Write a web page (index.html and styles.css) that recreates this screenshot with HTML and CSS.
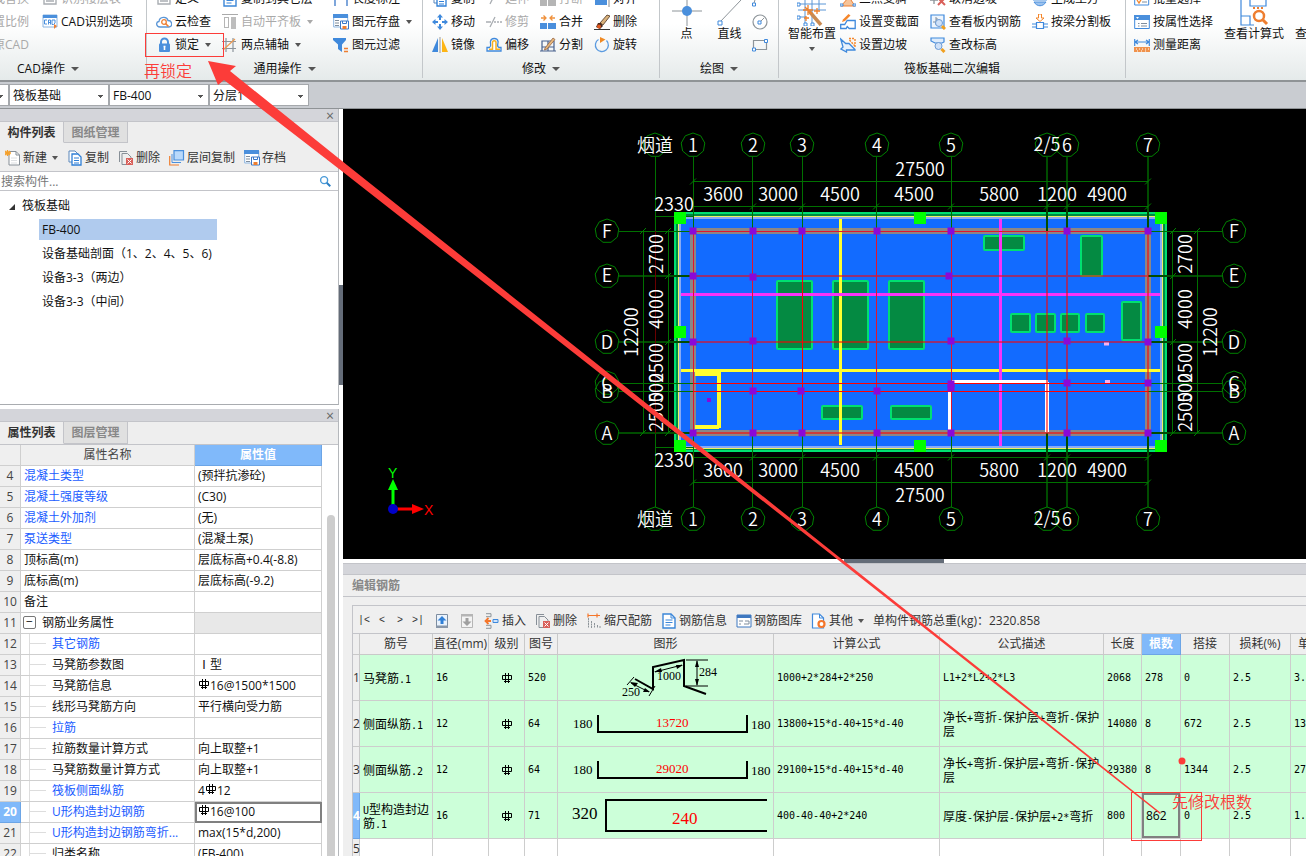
FILE: index.html
```html
<!DOCTYPE html>
<html lang="zh-CN">
<head>
  <meta charset="UTF-8" />
  <title>筏板基础 - FB-400</title>
  <link rel="stylesheet" href="styles.css">
</head>
<body>

  <!-- icon set -->
  <svg class="sprite" aria-hidden="true">
    <symbol id="i-doc" viewBox="0 0 16 16"><path d="M2 1h8l4 4v10H2z" fill="#fff" stroke="#3b86d8" stroke-width="1.4"/><path d="M10 1v4h4M4.500 7h7M4.500 9.500h7M4.500 12h5" fill="none" stroke="#3b86d8"/></symbol>
    <symbol id="i-gray" viewBox="0 0 16 16"><path d="M2 2h12v11H2zM4 10h8M4 7h8" fill="none" stroke="#a9adb2" stroke-width="1.400"/></symbol>
    <symbol id="i-cad" viewBox="0 0 16 16"><path d="M1 1h14v12H1z" fill="#fff" stroke="#8ab4e0"/><path d="M1 1h14v3H1z" fill="#4a8fdc"/><path d="M5 6H2.500v4H5M6.500 10.500V6h2v4.500M6.500 8.500h2M10 6v4.500h1.500L13 9V6z" fill="none" stroke="#4a8fdc"/><path d="M12 10l3 2-3 3z" fill="#ee7e30"/></symbol>
    <symbol id="i-cloud" viewBox="0 0 16 16"><path d="M4 13C0 13-.5 8 3 7.500 3.500 2.500 11 2 12 6.500 16.500 6.500 17 12.500 13 13z" fill="#fff" stroke="#5b96d6" stroke-width="1.300"/><circle cx="8" cy="8" r="2.300" fill="none" stroke="#ee7e30" stroke-width="1.300"/><path d="M9.500 9.500l3 3" stroke="#ee7e30" stroke-width="1.600"/></symbol>
    <symbol id="i-lock" viewBox="0 0 16 16"><path d="M5 7V5a3.500 3.500 0 0 1 7 0v2" fill="none" stroke="#4a8fdc" stroke-width="2"/><rect x="3" y="6.500" width="11" height="8.500" rx="1" fill="#4a8fdc"/><path d="M8.500 9v4M7.500 9.500h2" stroke="#fff" stroke-width="1.600"/></symbol>
    <symbol id="i-align" viewBox="0 0 16 16"><path d="M0 .5h16" stroke="#aaa"/><rect x="2.500" y="3.500" width="4" height="10" fill="none" stroke="#b5b5b5"/><rect x="9" y="3" width="5" height="12" fill="#bdbdbd"/></symbol>
    <symbol id="i-axis" viewBox="0 0 16 16"><path d="M4 1v14M11 1v14M0 4.500h14M0 11.500h14" stroke="#8d959c" stroke-width="1.200"/><path d="M1 13L13 2" stroke="#ee9a50" stroke-width="1.200"/></symbol>
    <symbol id="i-save" viewBox="0 0 16 16"><path d="M.7 1h14v12H.7z" fill="#fff" stroke="#8ab4e0"/><path d="M0 0h15v4H0z" fill="#4a8fdc"/><path d="M2 6.500h4M2 9h4M2 11.500h4" stroke="#7f8d9c"/><path d="M7.500 7h8v8h-8z" fill="#fff" stroke="#3b78c8"/><path d="M9.500 12h4v3h-4z" fill="#ee7e30"/><path d="M9.500 7v2.500h4V7" fill="none" stroke="#3b78c8"/></symbol>
    <symbol id="i-filter" viewBox="0 0 16 16"><path d="M0 1h13v2L9 7.500V15l-4-3V7.500L0 3z" fill="#3f89dc"/><path d="M11 11.500h4M11 14.500h4" stroke="#ee7e30" stroke-width="1.300"/></symbol>
    <symbol id="i-dim" viewBox="0 0 16 16"><path d="M2 15V7M14 15V7M2 8h12" fill="none" stroke="#3b78c8" stroke-width="1.300"/></symbol>
    <symbol id="i-copy" viewBox="0 0 16 16"><path d="M2 1h6l3 3v8H2z" fill="#fff" stroke="#5a87bb"/><path d="M5 4h6l3 3v8H5z" fill="#fff" stroke="#2f7fd6" stroke-width="1.300"/><path d="M7 8h5M7 10.500h5M7 13h5" stroke="#2f7fd6"/></symbol>
    <symbol id="i-move" viewBox="0 0 16 16"><path d="M8 0l3 3.500H9V6H7V3.500H5zM8 16l3-3.500H9V10H7v2.500H5zM0 8l3.500-3v2H6v2H3.500v2zM16 8l-3.500-3v2H10v2h2.500v2z" fill="#3f89dc"/></symbol>
    <symbol id="i-mirror" viewBox="0 0 16 16"><path d="M6 1v14H0z" fill="#3f89dc"/><path d="M10 1v14h6z" fill="#fdb515"/><path d="M8 0v16" stroke="#999"/></symbol>
    <symbol id="i-trim" viewBox="0 0 16 16"><path d="M0 8h5M8 8h2M11 8h2M14 8h2M4 13L9 3" stroke="#a9adb2" stroke-width="1.300"/></symbol>
    <symbol id="i-offset" viewBox="0 0 16 16"><path d="M1 14v-3.500h2.500C6 9 4 7 4.500 4.500c.5-4 7-4 7.500 0C12.500 7 10 9 13 10.500h2V14z" fill="#fff" stroke="#3f89dc" stroke-width="1.300"/><path d="M3 12.300h3.500V5.500c0-2.500 3.500-2.500 3.500 0v6.800h4" fill="none" stroke="#f7b021" stroke-width="1.500"/></symbol>
    <symbol id="i-merge" viewBox="0 0 16 16"><path d="M0 9h7v6H0zM8 9h8v6H8z" fill="#4a8fdc"/><path d="M1 4h5M3.500 1.500L6 4 3.500 6.500M15 4h-5M12.500 1.500L10 4l2.500 2.500" fill="none" stroke="#f0913c" stroke-width="1.300"/></symbol>
    <symbol id="i-split" viewBox="0 0 16 16"><path d="M2 4h12v10H2zM0 14h16M2 10h12M8 4v10" fill="none" stroke="#47618d" stroke-width="1.200"/><path d="M5 11l8-10 2 1.500L7 12l-2.500 1z" fill="#e7b97d" stroke="#8c5530" stroke-width=".7"/></symbol>
    <symbol id="i-brush" viewBox="0 0 16 16"><path d="M6 9l7-8 3 1-7 9z" fill="#d9b27c" stroke="#4b3420" stroke-width=".8"/><path d="M2 13l2-4 3 0 2 3-3 3z" fill="#4b2a1c"/><circle cx="5" cy="12.500" r="2" fill="#e2581e"/><path d="M0 15.500h16" stroke="#333"/></symbol>
    <symbol id="i-rotate" viewBox="0 0 16 16"><path d="M4.500 2.500a6.500 6.500 0 1 0 8 1" fill="none" stroke="#5b9be0" stroke-width="1.300"/><path d="M6 0l5.500 2.500L6 6z" fill="#f08a24"/></symbol>
    <symbol id="i-grayblocks" viewBox="0 0 16 16"><path d="M0 8h7v7H0zM8 8h8v7H8z" fill="#b5b5b5"/></symbol>
    <symbol id="i-blueblock" viewBox="0 0 16 16"><path d="M1 7h12v7H1z" fill="#4a8fdc"/><path d="M15 2v14" stroke="#888"/></symbol>
    <symbol id="i-circle" viewBox="0 0 16 16"><circle cx="8" cy="8" r="7" fill="none" stroke="#8d9499" stroke-width="1.200"/><path d="M7 9l5-5" stroke="#8d9499"/><path d="M6 7h3v3H6z" fill="#fff" stroke="#3f89dc"/></symbol>
    <symbol id="i-rect" viewBox="0 0 16 16"><path d="M1.500 3.500h13v9h-13z" fill="none" stroke="#8d9499" stroke-width="1.200"/><path d="M12.500 2.500h3v3h-3zM.5 11h3v3h-3z" fill="#fff" stroke="#3f89dc"/></symbol>
    <symbol id="i-arc" viewBox="0 0 16 16"><path d="M2 14C2 6 8 2 14 2" fill="none" stroke="#8d9499"/><path d="M.5 12h3v3h-3z" fill="#fff" stroke="#3f89dc"/></symbol>
    <symbol id="i-slope" viewBox="0 0 16 16"><path d="M1 15h14L9 6z" fill="#f6c49a" stroke="#ee7e30"/><path d="M0 13h3v2H0zM13 13h3v2h-3z" fill="#fff" stroke="#3f89dc"/></symbol>
    <symbol id="i-section" viewBox="0 0 16 16"><path d="M.7 14.500v-4h4l2.500-4h8v8h-6l-2 -2-1 2z" fill="#fff" stroke="#3f89dc" stroke-width="1.300"/><path d="M2 8l1-2.500L8.500 0l2 1.500L5 7z" fill="#f5862a"/></symbol>
    <symbol id="i-edge" viewBox="0 0 16 16"><path d="M.7 2l5 4.500L9 6.500l6 6V13H6.500v2L1 12l2-2z" fill="#e7f1fc" stroke="#3f89dc" stroke-width="1.300"/><path d="M9 1.500h6M15 2v9M9.500 3L15 9" fill="none" stroke="#f5862a" stroke-width="1.400" stroke-dasharray="2 1"/></symbol>
    <symbol id="i-cancel" viewBox="0 0 16 16"><path d="M0 9h8M4 5v8" stroke="#8d9499" stroke-width="1.300"/><path d="M8 7l7 7M15 7l-7 7" stroke="#d9605a" stroke-width="2"/></symbol>
    <symbol id="i-viewbar" viewBox="0 0 16 16"><path d="M1 1h13v13H1z" fill="#eef5fd" stroke="#3f89dc" stroke-width="1.200"/><path d="M3 8h4V4M6 3v8" fill="none" stroke="#7f8d9c"/><circle cx="9" cy="9" r="3.500" fill="#cfe1f8" stroke="#6d9bd4"/><path d="M12 12l3 3" stroke="#f0a020" stroke-width="3"/></symbol>
    <symbol id="i-level" viewBox="0 0 16 16"><path d="M1 1h13v4l-2 1H5L1 4z" fill="#dfecfb" stroke="#3f89dc" stroke-width="1.200"/><circle cx="8.500" cy="9" r="3.500" fill="#cfe1f8" stroke="#6d9bd4"/><path d="M11.500 12l3 3" stroke="#f0a020" stroke-width="3"/></symbol>
    <symbol id="i-earth" viewBox="0 0 16 16"><path d="M1 9h14M2 11c3 5 9 5 12 0z" fill="#9cc2ee" stroke="#4a8fdc"/></symbol>
    <symbol id="i-beam" viewBox="0 0 16 16"><path d="M4.500 8.500h7v6h-7zM0 10h4M12 10h4M0 13h4M12 13h4" fill="none" stroke="#3f89dc" stroke-width="1.200"/><path d="M6.500 0h3v4H12L8 7.500 4 4h2.500z" fill="#fff" stroke="#f5862a"/></symbol>
    <symbol id="i-batch" viewBox="0 0 16 16"><path d="M.7 2h14v12H.7z" fill="#fff" stroke="#3f89dc"/><path d="M3 9l2 3 3-5" fill="none" stroke="#f5862a" stroke-width="1.300"/><path d="M8 11h5" stroke="#7f8d9c"/></symbol>
    <symbol id="i-attr" viewBox="0 0 16 16"><path d="M.7 1.500h14.600v13H.7z" fill="#fff" stroke="#3f89dc"/><path d="M0 1h16v5H0z" fill="#4a8fdc"/><path d="M4 9.500h1.500M7 9.500h6M4 12h1.500M7 12h6" stroke="#7f8d9c"/><path d="M2 3h3l-1.500 2z" fill="#fff"/></symbol>
    <symbol id="i-ruler" viewBox="0 0 16 16"><path d="M.7 2v7M15.300 2v7M1 5h14M4 3L1 5l3 2M12 3l3 2-3 2" fill="none" stroke="#3f89dc" stroke-width="1.200"/><path d="M0 10h16v5H0z" fill="#f0924c"/><path d="M2 12h1M5 12h1M8 12h1M11 12h1M14 12h1M3 14h1M7 14h1M11 14h1" stroke="#fff"/></symbol>
    <symbol id="i-new" viewBox="0 0 16 16"><path d="M4 1.500h7l3.500 3.500v10H4z" fill="#fff" stroke="#878f97"/><path d="M11 1.500V5h3.500" fill="none" stroke="#878f97"/><path d="M6 8h6M6 10.500h6M6 13h6" stroke="#dcdfe2"/><path d="M0 1l5 4M5 1L0 5M2.500 0v6M0 3h6" stroke="#f5a02a" stroke-width="1.300"/></symbol>
    <symbol id="i-del" viewBox="0 0 16 16"><path d="M1.500 12V1.500H9" fill="none" stroke="#878f97"/><path d="M4 14.500v-11h5.500L13 7v2M4 14.500h4" fill="none" stroke="#878f97"/><path d="M8 8h7v7H8z" fill="#d9605a"/><path d="M9.500 9.500l4 4M13.500 9.500l-4 4" stroke="#fff"/></symbol>
    <symbol id="i-layer" viewBox="0 0 16 16"><path d="M.7 6v9H10" fill="none" stroke="#ee7e30" stroke-width="1.200"/><path d="M3 4v8.500h9" fill="none" stroke="#4a8fdc"/><path d="M5 .7h9.500V10H5z" fill="#b9d9fb" stroke="#4a8fdc" stroke-width="1.200"/></symbol>
    <symbol id="i-search" viewBox="0 0 16 16"><circle cx="7" cy="7" r="4" fill="none" stroke="#4a9ad8" stroke-width="1.600"/><path d="M10 10l4 4" stroke="#2b7fc4" stroke-width="2.200"/></symbol>
    <symbol id="i-up" viewBox="0 0 16 16"><path d="M2.500 1.500h11v13h-11z" fill="#eaf3fd" stroke="#7d8da0"/><path d="M2 12.500h12v2.500H2z" fill="#8896a8"/><path d="M8 3l4.500 4.500H9.500V11h-3V7.500H3.500z" fill="#2f7fd6"/></symbol>
    <symbol id="i-down" viewBox="0 0 16 16"><path d="M2.500 1.500h11v13h-11z" fill="#f3f3f3" stroke="#b5b5b5"/><path d="M2 1h12v2.500H2z" fill="#b5b5b5"/><path d="M8 13l4.500-4.500H9.500V5h-3v3.500H3.500z" fill="#9f9f9f"/></symbol>
    <symbol id="i-insert" viewBox="0 0 16 16"><path d="M2 .7h5v3H2M2 15.300h5v-3H2" fill="none" stroke="#8d9499"/><path d="M7 8H2M4.500 5L1.500 8l3 3" fill="none" stroke="#f5762a" stroke-width="1.800"/><path d="M9 6.500h5v3H9z" fill="#cfe3fb" stroke="#3f89dc"/></symbol>
    <symbol id="i-scale" viewBox="0 0 16 16"><path d="M2 2.500h12M11 .5v4M2 .5v4" stroke="#f5762a" stroke-width="1.200"/><path d="M2.500 5v10M5.500 8v7M8.500 10v5M11.500 12v3M14 13v2" stroke="#8d9499" stroke-dasharray="2 .5"/></symbol>
    <symbol id="i-lib" viewBox="0 0 16 16"><path d="M1 2h14v12H1z" fill="#fff" stroke="#3f78c0"/><path d="M1 2h14v3H1z" fill="#3f78c0"/><path d="M3 8h4M3 11h2M9 8h4v3H8" fill="none" stroke="#7f8d9c"/></symbol>
    <symbol id="i-other" viewBox="0 0 16 16"><path d="M1.500 1h7l4 4v10h-11z" fill="#fff" stroke="#3f89dc" stroke-width="1.200"/><path d="M8.500 1v4h4" fill="none" stroke="#3f89dc"/><circle cx="10.500" cy="11" r="3" fill="#fff" stroke="#f5762a" stroke-width="2.200"/></symbol>
    <symbol id="i-rebar" viewBox="0 0 12 12"><path d="M4.500 1v10M7.500 1v10M1.500 3.500h9v4h-9zM3 9.500h6" fill="none" stroke="#000"/></symbol>
    <symbol id="i-point" viewBox="0 0 30 30"><path d="M15 0v30M0 15h30" stroke="#8d9499"/><circle cx="15" cy="15" r="5" fill="#4a8fdc"/></symbol>
    <symbol id="i-line" viewBox="0 0 30 30"><path d="M5 26L26 4" stroke="#8d9499"/><path d="M3 25h4v4H3z" fill="#fff" stroke="#3f89dc"/></symbol>
    <symbol id="i-smart" viewBox="0 0 30 30"><path d="M8 0v28M15 0v30M22 0v14M1 8h28M1 14h28M1 21h8" stroke="#5b96d6"/><path d="M0 7h3v3H0zM0 20h3v3H0zM7 27h3v3H7zM14 27h3v3h-3z" fill="#fff" stroke="#3f89dc"/><path d="M12 15l12 14" stroke="#c98a52" stroke-width="3.500"/><path d="M11 9v10M6 14h10M8 11l7 7M20 12v6M17 15h6M9 20v5M7 22h5" stroke="#f0802a" stroke-width="1.300"/></symbol>
    <symbol id="i-calc" viewBox="0 0 30 30"><path d="M2 0v29h13M2 20h9v9M11 0v10h16V0" fill="none" stroke="#3f89dc" stroke-width="1.200"/><path d="M14 12h2M18 12h2M22 12h2" stroke="#ee7e30" stroke-width="2"/><circle cx="20" cy="20" r="5" fill="#fff" stroke="#ee7e30" stroke-width="2.500"/><path d="M24 24l4 4" stroke="#ee7e30" stroke-width="3"/></symbol>
  </svg>

  <header class="ribbon">
    <section class="group group-cad">
      <div class="group-body">
        <div class="tool-col">
          <button class="tool off"><svg class="icon"><use href="#i-gray"/></svg>查找替换</button>
          <button class="tool off"><svg class="icon"><use href="#i-gray"/></svg>设置比例</button>
          <button class="tool off"><svg class="icon"><use href="#i-gray"/></svg>还原CAD</button>
        </div>
        <div class="tool-col">
          <button class="tool off"><svg class="icon"><use href="#i-gray"/></svg>识别楼层表</button>
          <button class="tool"><svg class="icon"><use href="#i-cad"/></svg>CAD识别选项</button>
        </div>
      </div>
      <div class="group-label">CAD操作<i class="caret"></i></div>
    </section>

    <section class="group group-common">
      <div class="group-body">
        <div class="tool-col">
          <button class="tool"><svg class="icon"><use href="#i-gray"/></svg>定义</button>
          <button class="tool"><svg class="icon"><use href="#i-cloud"/></svg>云检查</button>
          <button class="tool"><svg class="icon"><use href="#i-lock"/></svg>锁定<i class="caret"></i></button>
        </div>
        <div class="tool-col">
          <button class="tool"><svg class="icon"><use href="#i-doc"/></svg>复制到其它层</button>
          <button class="tool off"><svg class="icon"><use href="#i-align"/></svg>自动平齐板<i class="caret"></i></button>
          <button class="tool"><svg class="icon"><use href="#i-axis"/></svg>两点辅轴<i class="caret"></i></button>
        </div>
        <div class="tool-col">
          <button class="tool"><svg class="icon"><use href="#i-dim"/></svg>长度标注</button>
          <button class="tool"><svg class="icon"><use href="#i-save"/></svg>图元存盘<i class="caret"></i></button>
          <button class="tool"><svg class="icon"><use href="#i-filter"/></svg>图元过滤</button>
        </div>
      </div>
      <div class="group-label">通用操作<i class="caret"></i></div>
    </section>

    <section class="group group-modify">
      <div class="group-body">
        <div class="tool-col">
          <button class="tool"><svg class="icon"><use href="#i-copy"/></svg>复制</button>
          <button class="tool"><svg class="icon"><use href="#i-move"/></svg>移动</button>
          <button class="tool"><svg class="icon"><use href="#i-mirror"/></svg>镜像</button>
        </div>
        <div class="tool-col">
          <button class="tool off"><svg class="icon"><use href="#i-trim"/></svg>延伸</button>
          <button class="tool off"><svg class="icon"><use href="#i-trim"/></svg>修剪</button>
          <button class="tool"><svg class="icon"><use href="#i-offset"/></svg>偏移</button>
        </div>
        <div class="tool-col">
          <button class="tool off"><svg class="icon"><use href="#i-grayblocks"/></svg>打断</button>
          <button class="tool"><svg class="icon"><use href="#i-merge"/></svg>合并</button>
          <button class="tool"><svg class="icon"><use href="#i-split"/></svg>分割</button>
        </div>
        <div class="tool-col">
          <button class="tool"><svg class="icon"><use href="#i-blueblock"/></svg>对齐</button>
          <button class="tool"><svg class="icon"><use href="#i-brush"/></svg>删除</button>
          <button class="tool"><svg class="icon"><use href="#i-rotate"/></svg>旋转</button>
        </div>
      </div>
      <div class="group-label">修改<i class="caret"></i></div>
    </section>

    <section class="group group-draw">
      <div class="group-body">
        <button class="big-tool"><svg class="icon-big"><use href="#i-point"/></svg>点</button>
        <button class="big-tool"><svg class="icon-big"><use href="#i-line"/></svg>直线</button>
        <div class="tool-col">
          <button class="tool" aria-label="弧"><svg class="icon"><use href="#i-arc"/></svg></button>
          <button class="tool" aria-label="圆"><svg class="icon"><use href="#i-circle"/></svg></button>
          <button class="tool" aria-label="矩形"><svg class="icon"><use href="#i-rect"/></svg></button>
        </div>
      </div>
      <div class="group-label">绘图<i class="caret"></i></div>
    </section>

    <section class="group group-raft">
      <div class="group-body">
        <button class="big-tool"><svg class="icon-big"><use href="#i-smart"/></svg>智能布置<i class="caret"></i></button>
        <div class="tool-col">
          <button class="tool"><svg class="icon"><use href="#i-slope"/></svg>三点变斜</button>
          <button class="tool"><svg class="icon"><use href="#i-section"/></svg>设置变截面</button>
          <button class="tool"><svg class="icon"><use href="#i-edge"/></svg>设置边坡</button>
        </div>
        <div class="tool-col">
          <button class="tool"><svg class="icon"><use href="#i-cancel"/></svg>取消边坡</button>
          <button class="tool"><svg class="icon"><use href="#i-viewbar"/></svg>查看板内钢筋</button>
          <button class="tool"><svg class="icon"><use href="#i-level"/></svg>查改标高</button>
        </div>
        <div class="tool-col">
          <button class="tool"><svg class="icon"><use href="#i-earth"/></svg>生成土方</button>
          <button class="tool"><svg class="icon"><use href="#i-beam"/></svg>按梁分割板</button>
        </div>
      </div>
      <div class="group-label">筏板基础二次编辑</div>
    </section>

    <section class="group group-select">
      <div class="group-body">
        <div class="tool-col">
          <button class="tool"><svg class="icon"><use href="#i-batch"/></svg>批量选择</button>
          <button class="tool"><svg class="icon"><use href="#i-attr"/></svg>按属性选择</button>
          <button class="tool"><svg class="icon"><use href="#i-ruler"/></svg>测量距离</button>
        </div>
        <button class="big-tool"><svg class="icon-big"><use href="#i-calc"/></svg>查看计算式</button>
        <button class="big-tool"><svg class="icon-big"><use href="#i-gray"/></svg>查看工程量</button>
      </div>
    </section>
  </header>

  <div class="selector-bar">
    <select class="pick pick-floor" aria-label="楼层"><option>基础层</option></select>
    <select class="pick" aria-label="构件类型"><option>筏板基础</option></select>
    <select class="pick" aria-label="构件"><option>FB-400</option></select>
    <select class="pick" aria-label="分层"><option>分层1</option></select>
  </div>

  <div class="workspace">
    <aside class="side">
      <section class="panel panel-list">
        <div class="panel-strip"><button class="close" aria-label="关闭">×</button></div>
        <div class="tabs">
          <button class="tab active">构件列表</button>
          <button class="tab">图纸管理</button>
        </div>
        <div class="list-tools">
          <button class="tool"><svg class="icon"><use href="#i-new"/></svg>新建<i class="caret"></i></button>
          <button class="tool"><svg class="icon"><use href="#i-copy"/></svg>复制</button>
          <button class="tool"><svg class="icon"><use href="#i-del"/></svg>删除</button>
          <button class="tool"><svg class="icon"><use href="#i-layer"/></svg>层间复制</button>
          <button class="tool"><svg class="icon"><use href="#i-save"/></svg>存档</button>
        </div>
        <div class="search">
          <input type="text" placeholder="搜索构件..." aria-label="搜索构件">
          <svg class="icon-small"><use href="#i-search"/></svg>
        </div>
        <ul class="tree">
          <li class="tree-root"><i class="expander"></i>筏板基础</li>
          <li class="tree-item selected">FB-400</li>
          <li class="tree-item">设备基础剖面（1、2、4、5、6)</li>
          <li class="tree-item">设备3-3（两边）</li>
          <li class="tree-item">设备3-3（中间）</li>
        </ul>
      </section>

      <section class="panel panel-props">
        <div class="panel-strip"><button class="close" aria-label="关闭">×</button></div>
        <div class="tabs">
          <button class="tab active">属性列表</button>
          <button class="tab">图层管理</button>
        </div>
        <div class="props-body">
          <table class="props">
            <colgroup><col class="p-no"><col class="p-name"><col class="p-value"></colgroup>
            <thead>
              <tr><th></th><th>属性名称</th><th class="on">属性值</th></tr>
            </thead>
            <tbody>
              <tr><th>4</th><td class="blue">混凝土类型</td><td>(预拌抗渗砼)</td></tr>
              <tr><th>5</th><td class="blue">混凝土强度等级</td><td>(C30)</td></tr>
              <tr><th>6</th><td class="blue">混凝土外加剂</td><td>(无)</td></tr>
              <tr><th>7</th><td class="blue">泵送类型</td><td>(混凝土泵)</td></tr>
              <tr><th>8</th><td>顶标高(m)</td><td>层底标高+0.4(-8.8)</td></tr>
              <tr><th>9</th><td>底标高(m)</td><td>层底标高(-9.2)</td></tr>
              <tr><th>10</th><td>备注</td><td></td></tr>
              <tr><th>11</th><td class="parent"><button class="fold" aria-label="折叠">−</button>钢筋业务属性</td><td class="locked"></td></tr>
              <tr><th>12</th><td class="child blue">其它钢筋</td><td></td></tr>
              <tr><th>13</th><td class="child">马凳筋参数图</td><td>Ⅰ型</td></tr>
              <tr><th>14</th><td class="child">马凳筋信息</td><td><svg class="rebar"><use href="#i-rebar"/></svg>16@1500*1500</td></tr>
              <tr><th>15</th><td class="child">线形马凳筋方向</td><td>平行横向受力筋</td></tr>
              <tr><th>16</th><td class="child blue">拉筋</td><td></td></tr>
              <tr><th>17</th><td class="child">拉筋数量计算方式</td><td>向上取整+1</td></tr>
              <tr><th>18</th><td class="child">马凳筋数量计算方式</td><td>向上取整+1</td></tr>
              <tr><th>19</th><td class="child blue">筏板侧面纵筋</td><td>4<svg class="rebar"><use href="#i-rebar"/></svg>12</td></tr>
              <tr><th class="on">20</th><td class="child blue">U形构造封边钢筋</td><td class="current"><svg class="rebar"><use href="#i-rebar"/></svg>16@100</td></tr>
              <tr><th>21</th><td class="child blue">U形构造封边钢筋弯折...</td><td>max(15*d,200)</td></tr>
              <tr><th>22</th><td class="child">归类名称</td><td>(FB-400)</td></tr>
            </tbody>
          </table>
          <div class="scroll-track"><div class="scroll-thumb"></div></div>
        </div>
      </section>
    </aside>

    <div class="splitter-v"><div class="grip-v"></div></div>

    <main class="main">
      <svg class="cad" viewBox="343 109 963 450" preserveAspectRatio="xMinYMin meet">
        <defs>
          <path id="bubble" d="M0-12 7.700-9.200 11.800-2 10.400 6 4 11.300H-4L-10.400 6-11.800-2-7.700-9.200z"/>
          <path id="tick" d="M-3 3L3-3"/>
          <rect id="column" x="-3.500" y="-3.500" width="7" height="7"/>
        </defs>

        <!-- slab -->
        <rect x="674" y="212" width="493" height="240" fill="#00e070"/>
        <rect x="676" y="214" width="489" height="236" fill="#008844"/>
        <rect x="678" y="216" width="485" height="233" fill="#f0f060"/>
        <rect x="679" y="217" width="483" height="231" fill="#88aaf4"/>
        <rect x="681" y="219" width="479" height="227" fill="#126bff"/>

        <!-- equipment pads -->
        <g fill="#048a42" stroke="#00e070" stroke-width="2">
          <rect x="777" y="281" width="35" height="68" rx="1"/><rect x="833" y="281" width="35" height="68" rx="1"/><rect x="889" y="281" width="35" height="68" rx="1"/>
          <rect x="822" y="406" width="40" height="13" rx="1"/><rect x="891" y="406" width="40" height="13" rx="1"/>
          <rect x="984" y="236" width="40" height="14" rx="1"/><rect x="1081" y="236" width="21" height="40" rx="1"/>
          <rect x="1011" y="314" width="19" height="18" rx="1"/><rect x="1036" y="314" width="19" height="18" rx="1"/><rect x="1061" y="314" width="18" height="18" rx="1"/><rect x="1086" y="314" width="18" height="18" rx="1"/>
          <rect x="1122" y="302" width="19" height="38" rx="1"/>
        </g>

        <!-- walls and strips -->
        <rect x="693" y="231" width="455" height="202" fill="none" stroke="#8c8686" stroke-width="6"/>
        <path d="M681 370.500h479M840.500 219v226" stroke="#ffff30" stroke-width="3" fill="none"/>
        <path d="M697 374h20M719 374v52M697 427h20" stroke="#ffff30" stroke-width="4" fill="none" stroke-linecap="square"/>
        <path d="M681 294.500h479M1000.500 219v227" stroke="#f833f8" stroke-width="3" fill="none"/>
        <path d="M951 381.500h97M949.500 391v40" stroke="#fff" stroke-width="3" fill="none"/>
        <path d="M1047 382v50" stroke="#fff" stroke-width="4" fill="none"/>

        <!-- axes -->
        <g class="axes" fill="none">
          <path d="M655.500 157v74M655.500 433v74M693.500 157v74M693.500 433v74M752.500 157v74M752.500 433v74M802.500 157v74M802.500 433v74M876.500 157v74M876.500 433v74M951.500 157v74M951.500 433v74" stroke="#007000"/>
          <path d="M1047 157v74M1047 433v74M1067 157v74M1067 433v74M1148 157v74M1148 433v74M619 276h74M1148 276h74M619 342h74M1148 342h74M619 433h74M1148 433h74" stroke="#004c00" stroke-width="2"/>
          <path d="M619 231.500h74M619 383.500h74M619 391.500h74M1148 231.500h74M1148 383.500h74M1148 391.500h74" stroke="#007000"/>
          <path d="M693 181.500h455M693 206.500h455M655 216.500h38M693 457.500h455M693 482.500h455M655 447.500h38M643.500 231v202M668.500 231v202M1172.500 231v202M1197.500 231v202" stroke="#007000"/>
        </g>
        <g class="axes" fill="none">
          <path d="M655.500 231v202" stroke="#6a0000"/>
          <path d="M693 276h455M693 342h455M693 433h455M1047 231v202M1067 231v202M1148 231v202" stroke="#f00" stroke-opacity=".55" stroke-width="2"/>
          <path d="M693 231.500h455M693.500 231v202M752.500 231v202M876.500 231v202M951.500 231v202" stroke="#e4142c"/>
          <path d="M693 383.500h455M693 391.500h455M802.500 231v202" stroke="#f00"/>
        </g>
        <g stroke="#008000">
          <use href="#tick" x="693" y="181.500"/><use href="#tick" x="1148" y="181.500"/><use href="#tick" x="693" y="482.500"/><use href="#tick" x="1148" y="482.500"/>
          <use href="#tick" x="753" y="206.500"/><use href="#tick" x="802" y="206.500"/><use href="#tick" x="876" y="206.500"/><use href="#tick" x="951" y="206.500"/><use href="#tick" x="1047" y="206.500"/><use href="#tick" x="1067" y="206.500"/><use href="#tick" x="1148" y="206.500"/>
          <use href="#tick" x="753" y="457.500"/><use href="#tick" x="802" y="457.500"/><use href="#tick" x="876" y="457.500"/><use href="#tick" x="951" y="457.500"/><use href="#tick" x="1047" y="457.500"/><use href="#tick" x="1067" y="457.500"/><use href="#tick" x="1148" y="457.500"/>
          <use href="#tick" x="643" y="231"/><use href="#tick" x="668" y="231"/><use href="#tick" x="668" y="276"/><use href="#tick" x="668" y="342"/><use href="#tick" x="643" y="433"/><use href="#tick" x="668" y="433"/>
          <use href="#tick" x="1173" y="231"/><use href="#tick" x="1197" y="231"/><use href="#tick" x="1173" y="276"/><use href="#tick" x="1173" y="342"/><use href="#tick" x="1173" y="433"/><use href="#tick" x="1197" y="433"/>
        </g>

        <!-- columns -->
        <g fill="#8a08d8">
          <use href="#column" x="693" y="231"/><use href="#column" x="753" y="231"/><use href="#column" x="802" y="231"/><use href="#column" x="877" y="231"/><use href="#column" x="951" y="231"/><use href="#column" x="1067" y="231"/><use href="#column" x="1148" y="231"/>
          <use href="#column" x="693" y="276"/><use href="#column" x="753" y="277"/><use href="#column" x="949" y="276"/>
          <use href="#column" x="693" y="342"/><use href="#column" x="753" y="341"/><use href="#column" x="951" y="341"/><use href="#column" x="1067" y="341"/><use href="#column" x="1148" y="342"/>
          <use href="#column" x="951" y="384"/><use href="#column" x="951" y="388"/><use href="#column" x="1067" y="383"/><use href="#column" x="1148" y="383"/>
          <use href="#column" x="753" y="391"/><use href="#column" x="801" y="391"/><use href="#column" x="877" y="391"/>
          <use href="#column" x="693" y="433"/><use href="#column" x="753" y="433"/><use href="#column" x="802" y="433"/><use href="#column" x="877" y="433"/><use href="#column" x="951" y="433"/><use href="#column" x="1067" y="433"/><use href="#column" x="1148" y="433"/>
          <rect x="707" y="398" width="4" height="4"/>
        </g>
        <path d="M1104 342.500h5v3h-5zM1105 380h5v3h-5z" fill="#f5b0f0"/>

        <!-- grips -->
        <path d="M674 212h12v12h-12zM914 212h12v12h-12zM1155 212h12v12h-12zM674 326h12v12h-12zM1155 326h12v12h-12zM674 440h12v12h-12zM914 440h12v12h-12zM1155 440h12v12h-12z" fill="#0f0"/>

        <!-- axis bubbles -->
        <g fill="none" stroke="#008000">
          <use href="#bubble" x="655" y="145"/><use href="#bubble" x="693" y="145"/><use href="#bubble" x="753" y="145"/><use href="#bubble" x="802" y="145"/><use href="#bubble" x="877" y="145"/><use href="#bubble" x="951" y="145"/><use href="#bubble" x="1047" y="145"/><use href="#bubble" x="1067" y="145"/><use href="#bubble" x="1148" y="145"/>
          <use href="#bubble" x="655" y="519"/><use href="#bubble" x="693" y="519"/><use href="#bubble" x="753" y="519"/><use href="#bubble" x="802" y="519"/><use href="#bubble" x="877" y="519"/><use href="#bubble" x="951" y="519"/><use href="#bubble" x="1047" y="519"/><use href="#bubble" x="1067" y="519"/><use href="#bubble" x="1148" y="519"/>
          <use href="#bubble" x="607" y="231"/><use href="#bubble" x="607" y="276"/><use href="#bubble" x="607" y="342"/><use href="#bubble" x="607" y="383"/><use href="#bubble" x="607" y="391"/><use href="#bubble" x="607" y="433"/>
          <use href="#bubble" x="1234" y="231"/><use href="#bubble" x="1234" y="276"/><use href="#bubble" x="1234" y="342"/><use href="#bubble" x="1234" y="383"/><use href="#bubble" x="1234" y="391"/><use href="#bubble" x="1234" y="433"/>
        </g>

        <g class="cad-text">
          <text x="655" y="152">烟道</text><text x="693" y="152">1</text><text x="753" y="152">2</text><text x="802" y="152">3</text><text x="877" y="152">4</text><text x="951" y="152">5</text><text x="1047" y="151">2/5</text><text x="1067" y="152">6</text><text x="1148" y="152">7</text>
          <text x="655" y="526">烟道</text><text x="693" y="526">1</text><text x="753" y="526">2</text><text x="802" y="526">3</text><text x="877" y="526">4</text><text x="951" y="526">5</text><text x="1047" y="525">2/5</text><text x="1067" y="526">6</text><text x="1148" y="526">7</text>
          <text x="607" y="238">F</text><text x="607" y="282">E</text><text x="607" y="349">D</text><text x="607" y="390">C</text><text x="607" y="398">B</text><text x="607" y="440">A</text>
          <text x="1234" y="238">F</text><text x="1234" y="282">E</text><text x="1234" y="349">D</text><text x="1234" y="390">C</text><text x="1234" y="398">B</text><text x="1234" y="440">A</text>
          <text x="920" y="176">27500</text><text x="674" y="211">2330</text>
          <text x="723" y="201">3600</text><text x="778" y="201">3000</text><text x="840" y="201">4500</text><text x="914" y="201">4500</text><text x="999" y="201">5800</text><text x="1057" y="201">1200</text><text x="1107" y="201">4900</text>
          <text x="723" y="477">3600</text><text x="778" y="477">3000</text><text x="840" y="477">4500</text><text x="914" y="477">4500</text><text x="999" y="477">5800</text><text x="1057" y="477">1200</text><text x="1107" y="477">4900</text>
          <text x="920" y="502">27500</text><text x="674" y="467">2330</text>
          <g transform="translate(663 0) rotate(-90)"><text x="-254">2700</text><text x="-309">4000</text><text x="-363">2500</text><text x="-388">500</text><text x="-412">2500</text></g>
          <g transform="translate(638 332) rotate(-90)"><text>12200</text></g>
          <g transform="translate(1192 0) rotate(-90)"><text x="-254">2700</text><text x="-309">4000</text><text x="-363">2500</text><text x="-388">500</text><text x="-412">2500</text></g>
          <g transform="translate(1217 332) rotate(-90)"><text>12200</text></g>
        </g>

        <!-- ucs -->
        <path d="M393 506V488" stroke="#0f0" stroke-width="3"/><path d="M393 479l5 11h-10z" fill="#0f0"/>
        <path d="M396 509h16" stroke="#f00" stroke-width="3"/><path d="M424 509l-12 5v-10z" fill="#f00"/>
        <circle cx="393" cy="509" r="5" fill="#0000c8"/>
        <text class="ucs" x="388" y="478" fill="#0f0">Y</text><text class="ucs" x="424" y="515" fill="#f00">X</text>
      </svg>

      <div class="splitter-h"><div class="grip-h"></div></div>

      <section class="editor">
        <div class="panel-strip"></div>
        <h2 class="editor-title">编辑钢筋</h2>
        <div class="grid-box">
          <div class="grid-tools">
            <div class="nav">
              <button>|&lt;</button><button>&lt;</button><button>&gt;</button><button>&gt;|</button>
            </div>
            <button class="tool" aria-label="上移"><svg class="icon"><use href="#i-up"/></svg></button>
            <button class="tool" aria-label="下移"><svg class="icon"><use href="#i-down"/></svg></button>
            <button class="tool"><svg class="icon"><use href="#i-insert"/></svg>插入</button>
            <button class="tool"><svg class="icon"><use href="#i-del"/></svg>删除</button>
            <button class="tool"><svg class="icon"><use href="#i-scale"/></svg>缩尺配筋</button>
            <button class="tool"><svg class="icon"><use href="#i-doc"/></svg>钢筋信息</button>
            <button class="tool"><svg class="icon"><use href="#i-lib"/></svg>钢筋图库</button>
            <button class="tool"><svg class="icon"><use href="#i-other"/></svg>其他<i class="caret"></i></button>
            <span class="total">单构件钢筋总重(kg)：2320.858</span>
          </div>
          <table class="bars">
            <colgroup>
              <col class="c-no"><col class="c-name"><col class="c-dia"><col class="c-grade"><col class="c-fig"><col class="c-shape"><col class="c-formula"><col class="c-desc"><col class="c-len"><col class="c-count"><col class="c-lap"><col class="c-loss"><col class="c-weight">
            </colgroup>
            <thead>
              <tr><th></th><th>筋号</th><th>直径(mm)</th><th>级别</th><th>图号</th><th>图形</th><th>计算公式</th><th>公式描述</th><th>长度</th><th class="on">根数</th><th>搭接</th><th>损耗(%)</th><th class="start">单重(kg)</th></tr>
            </thead>
            <tbody>
              <tr>
                <th>1</th><td class="cjk">马凳筋<span>.1</span></td><td>16</td><td class="mid"><svg class="rebar"><use href="#i-rebar"/></svg></td><td>520</td>
                <td class="shape">
                  <svg class="shape-art" viewBox="0 0 215 45">
                    <path d="M77 24L95 34V12L126 5V31L148 39" fill="none" stroke="#000" stroke-width="2"/>
                    <path d="M128 5h22M128 31h22M139 6v24M97 17L124 10M73 28L91 37M69 30l7-8M91 41l6-10" fill="none" stroke="#000"/>
                    <path d="M139 5l-2 7h4zM139 31l-2-7h4zM96 17l7-4 1 4zM125 10l-7 0 1 4zM72 27l8 1-3 4zM92 37l-7 0 2-4z"/>
                    <text class="s-small" x="99" y="25">1000</text><text class="s-small" x="141" y="21">284</text><text class="s-small" x="64" y="41">250</text>
                  </svg>
                </td>
                <td>1000+2*284+2*250</td><td>L1+2*L2+2*L3</td><td>2068</td><td>278</td><td>0</td><td>2.5</td><td>3.3</td>
              </tr>
              <tr>
                <th>2</th><td class="cjk">侧面纵筋<span>.1</span></td><td>12</td><td class="mid"><svg class="rebar"><use href="#i-rebar"/></svg></td><td>64</td>
                <td class="shape">
                  <svg class="shape-art" viewBox="0 0 215 45">
                    <path d="M40 14v17h149V14" fill="none" stroke="#000" stroke-width="2"/>
                    <text x="15" y="27">180</text><text class="s-red" x="98" y="26">13720</text><text x="193" y="28">180</text>
                  </svg>
                </td>
                <td>13800+15*d-40+15*d-40</td><td class="cjk">净长<span>+</span>弯折<span>-</span>保护层<span>+</span>弯折<span>-</span>保护层</td><td>14080</td><td>8</td><td>672</td><td>2.5</td><td>13.1</td>
              </tr>
              <tr>
                <th>3</th><td class="cjk">侧面纵筋<span>.2</span></td><td>12</td><td class="mid"><svg class="rebar"><use href="#i-rebar"/></svg></td><td>64</td>
                <td class="shape">
                  <svg class="shape-art" viewBox="0 0 215 45">
                    <path d="M40 14v17h149V14" fill="none" stroke="#000" stroke-width="2"/>
                    <text x="15" y="27">180</text><text class="s-red" x="98" y="26">29020</text><text x="193" y="28">180</text>
                  </svg>
                </td>
                <td>29100+15*d-40+15*d-40</td><td class="cjk">净长<span>+</span>弯折<span>-</span>保护层<span>+</span>弯折<span>-</span>保护层</td><td>29380</td><td>8</td><td>1344</td><td>2.5</td><td>27.3</td>
              </tr>
              <tr>
                <th class="on">4</th><td class="cjk"><span>U</span>型构造封边筋<span>.1</span></td><td>16</td><td class="mid"><svg class="rebar"><use href="#i-rebar"/></svg></td><td>71</td>
                <td class="shape">
                  <svg class="shape-art" viewBox="0 0 215 45">
                    <path d="M209 7H48v31h161" fill="none" stroke="#000" stroke-width="2"/>
                    <text class="s-big" x="14" y="26">320</text><text class="s-big s-red" x="114" y="31">240</text>
                  </svg>
                </td>
                <td>400-40-40+2*240</td><td class="cjk">厚度<span>-</span>保护层<span>-</span>保护层<span>+2*</span>弯折</td><td>800</td><td class="edit"><input type="text" value="862" aria-label="根数"></td><td>0</td><td>2.5</td><td>1.2</td>
              </tr>
              <tr class="blank"><th>5</th><td></td><td></td><td></td><td></td><td></td><td></td><td></td><td></td><td></td><td></td><td></td><td></td></tr>
            </tbody>
          </table>
        </div>
      </section>
    </main>
  </div>

  <!-- review notes drawn over the window -->
  <svg class="notes">
    <path d="M208 61L236 66 230 71 347 165 592 360 844 561 1161 813 1160 814 842 563 588 364 343 172 224 80 218 85z" fill="#fc3c39"/>
    <rect x="145.500" y="33.500" width="78" height="23" fill="none" stroke="#fc3c39"/>
    <rect x="1131.500" y="792.500" width="70" height="48" fill="none" stroke="#fc3c39"/>
    <circle cx="1182" cy="761" r="3.500" fill="#fc3c39"/>
    <text x="144" y="77">再锁定</text>
    <text x="1172" y="808">先修改根数</text>
  </svg>

</body>
</html>
```
FILE: styles.css
```css
* {
  box-sizing: border-box;
}

body {
  margin: 0;
  height: 100vh;
  overflow: hidden;
  display: flex;
  flex-direction: column;
  font-family: "Open Sans", "Noto Sans CJK SC", sans-serif;
  font-size: 12px;
  line-height: 16px;
  color: #111;
  background: #fff;
}

button {
  font: inherit;
  color: inherit;
  background: none;
  border: 0;
  padding: 0;
  margin: 0;
}

.sprite {
  display: none;
}

.icon {
  width: 16px;
  height: 16px;
  flex: none;
}

.icon-small {
  width: 14px;
  height: 14px;
}

.icon-big {
  width: 30px;
  height: 30px;
}

.rebar {
  width: 12px;
  height: 12px;
}

.caret {
  width: 0;
  height: 0;
  border: 3px solid transparent;
  border-top: 4px solid #555;
  border-bottom: 0;
  margin-left: 3px;
}

/* ribbon */
.ribbon {
  display: flex;
  flex: none;
  height: 82px;
  overflow: hidden;
  background: linear-gradient(#fff 30%, #e5eaea);
  border-bottom: 2px solid #8f9396;
}

.group {
  flex: none;
  display: flex;
  flex-direction: column;
  height: 78px;
  border-right: 1px solid #c3c7ca;
}

.group-body {
  display: flex;
  height: 69px;
  margin-top: -13px;
}

.group-label {
  display: flex;
  justify-content: center;
  align-items: center;
  height: 22px;
  padding-top: 4px;
}

.group-label .caret {
  border-width: 4px 4px 0;
  margin-left: 6px;
}

.tool-col {
  display: flex;
  flex-direction: column;
}

.tool {
  display: flex;
  align-items: center;
  gap: 3px;
  height: 23px;
  white-space: nowrap;
}

.off {
  color: #a9a9a9;
}

.off .caret {
  border-top-color: #a9a9a9;
}

.big-tool {
  display: flex;
  flex-direction: column;
  align-items: center;
  padding-top: 9px;
  white-space: nowrap;
}

.big-tool .caret {
  margin: 5px 0 0;
}

.group-cad {
  width: 197px;
  margin-left: -50px;
}

.group-cad .group-body {
  padding-left: 12px;
}

.group-cad .tool-col {
  width: 80px;
}

.group-common {
  width: 276px;
}

.group-common .group-body {
  display: grid;
  grid-template-columns: 66px 111px auto;
  padding-left: 9px;
}

.group-modify {
  width: 237px;
}

.group-modify .group-body {
  display: grid;
  grid-template-columns: repeat(4, 54px);
  padding-left: 9px;
}

.group-draw {
  width: 119px;
}

.group-draw .group-body {
  display: grid;
  grid-template-columns: 41px 41px 16px;
  padding-left: 6px;
  column-gap: 2px;
}

.group-raft {
  width: 347px;
}

.group-raft .group-body {
  display: grid;
  grid-template-columns: 56px 90px 102px auto;
  padding-left: 5px;
}

.group-select .group-body {
  padding-left: 8px;
  gap: 11px;
}

/* floor / element pickers */
.selector-bar {
  display: flex;
  flex: none;
  height: 27px;
  padding-top: 2px;
  background: #c9ccd1;
  border-bottom: 1px solid #8f9396;
}

.pick {
  width: 100px;
  height: 22px;
  padding: 1px 0 0 3px;
  border: 1px solid #a5a8ac;
  border-radius: 0;
  font: inherit;
  color: #111;
  appearance: none;
  background: linear-gradient(#555, #555) no-repeat 88px 10px / 5px 1px,
              linear-gradient(#555, #555) no-repeat 89px 11px / 3px 1px,
              linear-gradient(#555, #555) no-repeat 90px 12px / 1px 1px, #fff;
}

.pick-floor {
  margin-left: -91px;
}

/* left side */
.workspace {
  flex: 1;
  display: flex;
  min-height: 0;
  overflow: hidden;
}

.side {
  flex: none;
  width: 339px;
  display: flex;
  flex-direction: column;
  min-height: 0;
}

.panel {
  background: #fff;
  border-right: 1px solid #b5b8bc;
}

.panel-list {
  height: 296px;
  border-bottom: 1px solid #a9acb0;
  margin-bottom: 4px;
  flex: none;
}

.panel-props {
  flex: 1;
  min-height: 0;
  overflow: hidden;
}

.panel-strip {
  display: flex;
  justify-content: flex-end;
  height: 13px;
  background: #d4d5da;
  border-bottom: 1px solid #c3c4c9;
}

.close {
  width: 16px;
  line-height: 11px;
  font-size: 14px;
  color: #666;
}

.tabs {
  display: flex;
  height: 21px;
  background: #eee;
}

.panel-props .tabs {
  height: 22px;
}

.tab {
  width: 64px;
  padding-top: 1px;
  font-weight: bold;
  color: #888;
  background: #e0e0e0;
  border-right: 1px solid #c3c4c9;
  border-bottom: 1px solid #c3c4c9;
}

.tab.active {
  color: #333;
  background: #eee;
  border-bottom-color: #eee;
}

.list-tools {
  display: flex;
  align-items: center;
  gap: 9px;
  height: 29px;
  padding: 2px 0 0 5px;
  color: #333;
  background: #eee;
  border-bottom: 1px solid #c3c4c9;
}

.list-tools .tool,
.grid-tools .tool {
  gap: 2px;
}

.search {
  display: flex;
  align-items: center;
  height: 19px;
  padding-right: 6px;
  border-bottom: 1px solid #c3c4c9;
}

.search input {
  flex: 1;
  min-width: 0;
  height: 18px;
  padding: 0 1px;
  border: 0;
  outline: 0;
  font: inherit;
}

.search input::placeholder {
  color: #777;
}

.tree {
  list-style: none;
  margin: 0;
  padding: 4px 0 0;
}

.tree li {
  height: 21px;
  line-height: 21px;
  margin-bottom: 3px;
}

.tree-root {
  padding-left: 9px;
}

.expander {
  display: inline-block;
  border-left: 6px solid transparent;
  border-bottom: 6px solid #333;
  margin-right: 7px;
}

.tree-item {
  width: 178px;
  margin-left: 39px;
  padding-left: 3px;
  white-space: nowrap;
}

.tree-item.selected {
  background: #b0cbee;
}

/* property table */
.props-body {
  display: flex;
  align-items: flex-start;
  border-top: 1px solid #c3c4c9;
}

.props,
.bars {
  table-layout: fixed;
  border-collapse: separate;
  border-spacing: 0;
}

.props {
  width: 322px;
}

.p-no { width: 21px; }
.p-name { width: 174px; }
.p-value { width: 127px; }

.props th,
.props td {
  height: 21px;
  padding: 0 3px;
  border-right: 1px solid #cfcfcf;
  border-bottom: 1px solid #cfcfcf;
  text-align: left;
  white-space: nowrap;
  overflow: hidden;
}

.props th {
  padding: 0;
  text-align: center;
  font-weight: normal;
  color: #444;
  background: #efefef;
}

.props .on,
.bars .on {
  font-weight: bold;
  color: #fff;
  background: #80b9fa;
  border-color: #6ca5e6;
}

.props .blue {
  color: #1a5cff;
}

.props .parent {
  padding-left: 2px;
}

.fold {
  width: 13px;
  height: 13px;
  margin-right: 6px;
  line-height: 10px;
  vertical-align: 1px;
  border: 1px solid #777;
  border-radius: 2px;
}

.props .child {
  padding-left: 8px;
  background: linear-gradient(#ddd, #ddd) no-repeat 8px 0 / 1px 100%;
}

.child::before {
  content: "";
  display: inline-block;
  width: 17px;
  margin-right: 6px;
  border-top: 1px solid #ddd;
  vertical-align: 4px;
}

.props .locked {
  background: #e8e8e8;
}

.props .current {
  outline: 2px solid #808080;
  outline-offset: -2px;
}

.scroll-track {
  flex: 1;
  padding: 70px 3px 0 5px;
}

.scroll-thumb {
  height: 500px;
  border-radius: 4px;
  background: #cdcdcd;
}

.splitter-v {
  flex: none;
  width: 4px;
  padding-top: 176px;
}

.grip-v {
  height: 100px;
  background: #646c78;
}

/* drawing area */
.main {
  flex: 1;
  min-width: 0;
  display: flex;
  flex-direction: column;
}

.cad {
  flex: none;
  display: block;
  width: 100%;
  background: #000;
}

.axes {
  shape-rendering: crispEdges;
}

.cad-text {
  font-family: "Noto Sans CJK SC", sans-serif;
  font-size: 18px;
  font-weight: 350;
  fill: #fff;
  text-anchor: middle;
}

.ucs {
  font-family: "Liberation Sans", sans-serif;
  font-size: 14px;
}

.splitter-h {
  flex: none;
  height: 4px;
}

.grip-h {
  width: 100px;
  height: 4px;
  margin-left: 52%;
  background: #646c78;
}

/* rebar editor */
.editor {
  flex: 1;
  min-height: 0;
  overflow: hidden;
  background: #efefef;
}

.editor .panel-strip {
  height: 12px;
  border-top: 1px solid #c3c4c9;
}

.editor-title {
  margin: 0;
  height: 22px;
  padding-left: 9px;
  font-size: 12px;
  line-height: 22px;
  color: #888;
  border-bottom: 1px solid #c3c4c9;
}

.grid-box {
  margin: 8px 0 0 9px;
  border-left: 1px solid #c3c4c9;
  border-top: 1px solid #c3c4c9;
  overflow: hidden;
}

.grid-tools {
  display: flex;
  align-items: center;
  gap: 9px;
  height: 28px;
  padding-top: 2px;
  color: #333;
  border-bottom: 1px solid #c3c4c9;
}

.nav {
  display: flex;
  gap: 4px;
  padding-left: 4px;
  font-family: "Liberation Mono", monospace;
  font-size: 10px;
}

.nav button {
  width: 14px;
}

.total {
  white-space: nowrap;
}

.bars {
  width: 1008px;
  background: #fff;
}

.c-no { width: 7px; }
.c-name { width: 73px; }
.c-dia { width: 56px; }
.c-grade { width: 36px; }
.c-fig { width: 33px; }
.c-shape { width: 216px; }
.c-formula { width: 166px; }
.c-desc { width: 164px; }
.c-len { width: 38px; }
.c-count { width: 39px; }
.c-lap { width: 49px; }
.c-loss { width: 61px; }
.c-weight { width: 70px; }

.bars th {
  height: 21px;
  padding: 0;
  font-weight: normal;
  color: #333;
  background: #efefef;
  border-right: 1px solid #c9c9c9;
  border-bottom: 1px solid #c9c9c9;
  white-space: nowrap;
}

.bars .start {
  padding-left: 7px;
  text-align: left;
}

.bars td {
  height: 46px;
  padding: 0 3px;
  font-family: "DejaVu Sans Mono", monospace;
  font-size: 10px;
  line-height: 14px;
  color: #000;
  background: #ccffd9;
  border-right: 1px solid #cdcdcd;
  border-bottom: 1px solid #cdcdcd;
}

.bars .cjk {
  padding-right: 0;
  font-family: "Noto Sans CJK SC", sans-serif;
  font-size: 12px;
}

.cjk span {
  font-family: "DejaVu Sans Mono", monospace;
  font-size: 10px;
  line-height: 8px;
}

.mid .rebar {
  display: block;
  margin: 0 auto;
}

.bars .shape {
  padding: 0;
}

.shape-art {
  display: block;
  width: 215px;
  height: 45px;
  font-family: "Liberation Serif", serif;
  font-size: 13px;
}

.s-small {
  font-size: 12px;
}

.s-big {
  font-size: 17px;
}

.s-red {
  fill: #f00;
}

.bars .edit {
  padding: 0;
}

.edit input {
  display: block;
  width: 38px;
  height: 45px;
  padding: 0 2px;
  border: 2px solid #808080;
  border-radius: 0;
  outline: 0;
  background: transparent;
  font-family: "Open Sans", sans-serif;
  font-size: 12px;
}

.bars .blank td {
  height: 21px;
  background: #fff;
}

/* review notes */
.notes {
  position: absolute;
  left: 0;
  top: 0;
  width: 100%;
  height: 100%;
  pointer-events: none;
  font-family: "Noto Sans CJK SC", sans-serif;
  font-size: 16px;
  font-weight: 350;
  fill: #fc3c39;
}
```
